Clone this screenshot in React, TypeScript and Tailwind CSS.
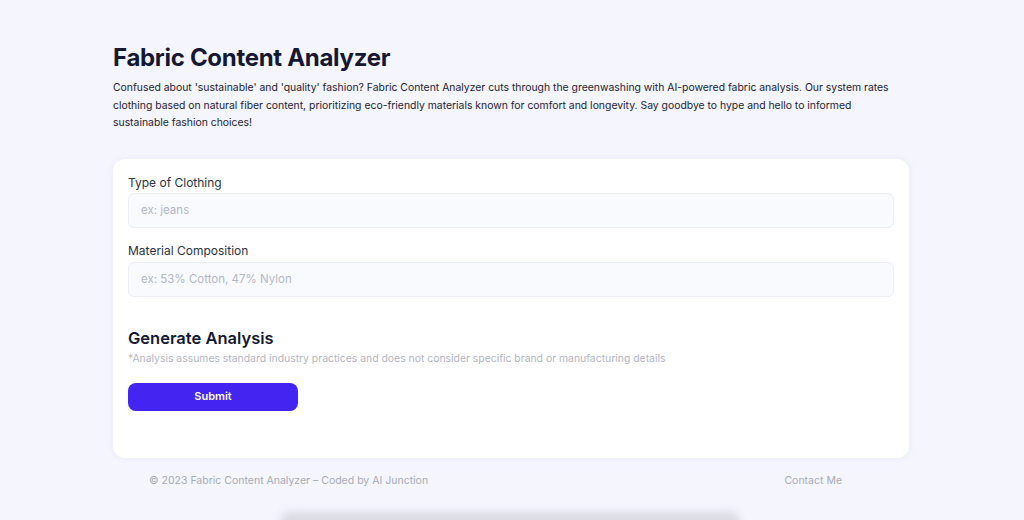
export default function App() {
  return (
    <div
      className="relative w-[1024px] h-[520px] overflow-hidden bg-[#f4f5fd]"
      style={{ fontFamily: "Inter, 'Noto Sans', sans-serif" }}
    >
      <div className="w-[796px] pt-[42px] ml-[113px]">
        <h1 className="text-[24px] leading-[32px] font-bold tracking-[-0.3px] text-[#141833]">
          Fabric Content Analyzer
        </h1>
        <p className="mt-[5px] text-[10.4px] leading-[17.5px] text-[#1f2233] pr-[10px]">
          Confused about 'sustainable' and 'quality' fashion? Fabric Content Analyzer cuts through the greenwashing with AI-powered fabric analysis. Our system rates clothing based on natural fiber content, prioritizing eco-friendly materials known for comfort and longevity. Say goodbye to hype and hello to informed sustainable fashion choices!
        </p>

        <div className="mt-[27px] h-[299px] rounded-[12px] bg-white px-[15px] pt-[16px] shadow-[0_0_6px_rgba(200,205,230,0.25)]">
          <label className="block text-[12px] leading-[16px] text-[#2d3142]">Type of Clothing</label>
          <input
            placeholder="ex: jeans"
            className="mt-[2px] w-full h-[35px] rounded-[6px] border border-[#eceef5] bg-[#f9fafd] px-[12px] text-[11.5px] text-[#374151] placeholder:text-[#b4b8c6] outline-none"
          />
          <label className="block mt-[15px] text-[12px] leading-[16px] text-[#2d3142]">Material Composition</label>
          <input
            placeholder="ex: 53% Cotton, 47% Nylon"
            className="mt-[3px] w-full h-[35px] rounded-[6px] border border-[#eceef5] bg-[#f9fafd] px-[12px] text-[11.5px] text-[#374151] placeholder:text-[#b4b8c6] outline-none"
          />
          <h2 className="mt-[30px] text-[16.5px] leading-[22px] font-semibold text-[#141833]">Generate Analysis</h2>
          <p className="mt-[3px] text-[10.4px] leading-[14px] text-[#b3b7c4]">
            *Analysis assumes standard industry practices and does not consider specific brand or manufacturing details
          </p>
          <button className="mt-[17px] w-[170px] h-[28px] rounded-[8px] bg-[#4324f1] text-white text-[11px] font-semibold">
            Submit
          </button>
        </div>

        <div className="flex justify-between pl-[36px] pr-[67px] pt-[15px] text-[10.5px] text-[#a8acb8]">
          <span>© 2023 Fabric Content Analyzer – Coded by AI Junction</span>
          <span>Contact Me</span>
        </div>
      </div>

      <div className="absolute left-[280px] top-[512px] w-[460px] h-[20px] rounded-[10px] bg-[#d9dbe2] blur-[4px]" />
    </div>
  );
}
